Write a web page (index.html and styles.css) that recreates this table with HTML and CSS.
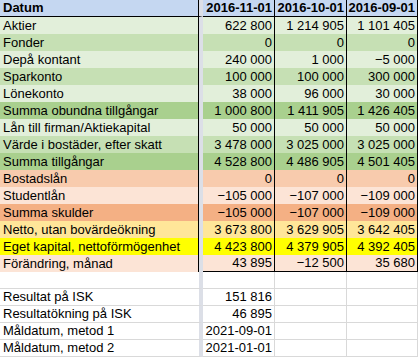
FILE: index.html
```html
<!DOCTYPE html>
<html lang="sv">
<head>
<meta charset="utf-8">
<title>Förmögenhet</title>
<link rel="stylesheet" href="styles.css">
</head>
<body>
<div class="sheet">
  <div class="row head"><div class="lab">Datum</div><div class="num">2016-11-01</div><div class="num">2016-10-01</div><div class="num">2016-09-01</div></div>
  <div class="row g1"><div class="lab">Aktier</div><div class="num">622 800</div><div class="num">1 214 905</div><div class="num">1 101 405</div></div>
  <div class="row g2"><div class="lab">Fonder</div><div class="num">0</div><div class="num">0</div><div class="num">0</div></div>
  <div class="row g1"><div class="lab">Depå kontant</div><div class="num">240 000</div><div class="num">1 000</div><div class="num">−5 000</div></div>
  <div class="row g2"><div class="lab">Sparkonto</div><div class="num">100 000</div><div class="num">100 000</div><div class="num">300 000</div></div>
  <div class="row g1"><div class="lab">Lönekonto</div><div class="num">38 000</div><div class="num">96 000</div><div class="num">30 000</div></div>
  <div class="row g3"><div class="lab">Summa obundna tillgångar</div><div class="num">1 000 800</div><div class="num">1 411 905</div><div class="num">1 426 405</div></div>
  <div class="row g1"><div class="lab">Lån till firman/Aktiekapital</div><div class="num">50 000</div><div class="num">50 000</div><div class="num">50 000</div></div>
  <div class="row g2"><div class="lab">Värde i bostäder, efter skatt</div><div class="num">3 478 000</div><div class="num">3 025 000</div><div class="num">3 025 000</div></div>
  <div class="row g3"><div class="lab">Summa tillgångar</div><div class="num">4 528 800</div><div class="num">4 486 905</div><div class="num">4 501 405</div></div>
  <div class="row o2"><div class="lab">Bostadslån</div><div class="num">0</div><div class="num">0</div><div class="num">0</div></div>
  <div class="row o1"><div class="lab">Studentlån</div><div class="num">−105 000</div><div class="num">−107 000</div><div class="num">−109 000</div></div>
  <div class="row o3"><div class="lab">Summa skulder</div><div class="num">−105 000</div><div class="num">−107 000</div><div class="num">−109 000</div></div>
  <div class="row y1"><div class="lab">Netto, utan bovärdeökning</div><div class="num">3 673 800</div><div class="num">3 629 905</div><div class="num">3 642 405</div></div>
  <div class="row y2"><div class="lab">Eget kapital, nettoförmögenhet</div><div class="num">4 423 800</div><div class="num">4 379 905</div><div class="num">4 392 405</div></div>
  <div class="row o1 last"><div class="lab">Förändring, månad</div><div class="num">43 895</div><div class="num">−12 500</div><div class="num">35 680</div></div>
  <div class="row plain"><div class="lab"></div><div class="num"></div><div class="num"></div><div class="num"></div></div>
  <div class="row plain"><div class="lab">Resultat på ISK</div><div class="num">151 816</div><div class="num"></div><div class="num"></div></div>
  <div class="row plain"><div class="lab">Resultatökning på ISK</div><div class="num">46 895</div><div class="num"></div><div class="num"></div></div>
  <div class="row plain"><div class="lab">Måldatum, metod 1</div><div class="num">2021-09-01</div><div class="num"></div><div class="num"></div></div>
  <div class="row plain"><div class="lab">Måldatum, metod 2</div><div class="num">2021-01-01</div><div class="num"></div><div class="num"></div></div>
</div>
</body>
</html>
```
FILE: styles.css
```css
html, body {
  margin: 0;
  padding: 0;
  background: #ffffff;
}
.sheet {
  width: 418px;
  font-family: "Liberation Sans", Arial, sans-serif;
  font-size: 13px;
  color: #000;
}
.row {
  display: grid;
  grid-template-columns: 203px 72px 72px 71px;
  height: 17px;
}
.row > div {
  box-sizing: border-box;
  height: 17px;
  line-height: 17px;
  white-space: nowrap;
  overflow: visible;
}
.lab {
  padding-left: 3px;
  border-right: 4px solid #dcdfe7;
  box-shadow: inset -1px 0 0 #000;
}
.num {
  text-align: right;
  padding-right: 2px;
  border-right: 1px solid #000;
}
.head > div {
  background: #c5d7f1;
  font-weight: bold;
  border-bottom: 1px solid #000;
  line-height: 16px;
}
.head > .lab {
  border-right-color: #dcdfe7;
}
.g1 > div { background-color: #e2efda; }
.g2 > div { background-color: #c6e0b4; }
.g3 > div { background-color: #a9d08e; }
.o1 > div { background-color: #fce4d6; }
.o2 > div { background-color: #f8cbad; }
.o3 > div { background-color: #f4b084; }
.y1 > div { background-color: #ffe699; }
.y2 > div { background-color: #ffff00; }
.row > .lab { background-clip: padding-box; }
.last > .num {
  border-bottom: 1px solid #000;
  line-height: 16px;
}
.plain > div {
  background: #fff;
  border-bottom: 1px solid #d9d9d9;
  line-height: 16px;
}
.plain > .lab {
  box-shadow: none;
}
.plain > .num {
  border-right-color: #d9d9d9;
  overflow: visible;
}
```
